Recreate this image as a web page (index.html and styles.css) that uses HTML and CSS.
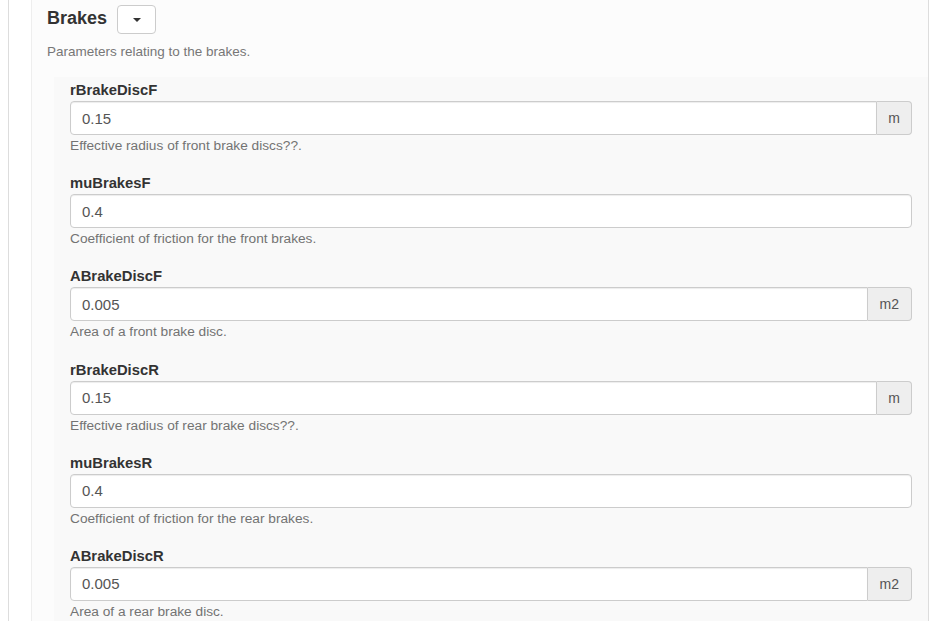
FILE: index.html
```html
<!DOCTYPE html>
<html>
<head>
<meta charset="utf-8">
<link rel="stylesheet" href="styles.css">
</head>
<body>
<div class="panel">
  <div class="section">
    <div class="header">
      <span class="title">Brakes</span>
      <button class="toggle"><span class="caret"></span></button>
    </div>
    <p class="desc">Parameters relating to the brakes.</p>
    <div class="params">
      <div class="group">
        <label class="label">rBrakeDiscF</label>
        <div class="input-group">
          <input class="input with-addon" type="text" value="0.15">
          <span class="addon">m</span>
        </div>
        <p class="help">Effective radius of front brake discs??.</p>
      </div>
      <div class="group">
        <label class="label">muBrakesF</label>
        <div class="input-group">
          <input class="input" type="text" value="0.4">
        </div>
        <p class="help">Coefficient of friction for the front brakes.</p>
      </div>
      <div class="group">
        <label class="label">ABrakeDiscF</label>
        <div class="input-group">
          <input class="input with-addon" type="text" value="0.005">
          <span class="addon addon-wide">m2</span>
        </div>
        <p class="help">Area of a front brake disc.</p>
      </div>
      <div class="group">
        <label class="label">rBrakeDiscR</label>
        <div class="input-group">
          <input class="input with-addon" type="text" value="0.15">
          <span class="addon">m</span>
        </div>
        <p class="help">Effective radius of rear brake discs??.</p>
      </div>
      <div class="group">
        <label class="label">muBrakesR</label>
        <div class="input-group">
          <input class="input" type="text" value="0.4">
        </div>
        <p class="help">Coefficient of friction for the rear brakes.</p>
      </div>
      <div class="group">
        <label class="label">ABrakeDiscR</label>
        <div class="input-group">
          <input class="input with-addon" type="text" value="0.005">
          <span class="addon addon-wide">m2</span>
        </div>
        <p class="help">Area of a rear brake disc.</p>
      </div>
    </div>
  </div>
</div>
</body>
</html>
```

FILE: styles.css
```css
html, body {
  margin: 0;
  padding: 0;
  background: #ffffff;
}
body {
  font-family: "Liberation Sans", Arial, Helvetica, sans-serif;
  color: #333333;
}
.panel {
  margin-left: 8px;
  width: 921px;
  box-sizing: border-box;
  border-left: 1px solid #dddddd;
  border-right: 1px solid #dddddd;
  padding-left: 22px;
}
.section {
  border-left: 1px solid #eeeeee;
  background: #fcfcfc;
  padding: 5px 0 0 15px;
}
.header {
  display: flex;
  align-items: center;
  gap: 10px;
  height: 29px;
}
.title {
  font-size: 18px;
  font-weight: bold;
  color: #333333;
  line-height: 29px;
  position: relative;
  top: -1px;
}
.toggle {
  width: 39px;
  height: 29px;
  margin: 0;
  padding: 0;
  background: #ffffff;
  border: 1px solid #cccccc;
  border-radius: 4px;
  display: flex;
  align-items: center;
  justify-content: center;
}
.caret {
  display: block;
  width: 0;
  height: 0;
  border-top: 4px solid #333333;
  border-left: 4px solid transparent;
  border-right: 4px solid transparent;
}
.desc {
  margin: 9px 0 16px 0;
  font-size: 13.5px;
  line-height: 18px;
  color: #777777;
}
.params {
  margin-left: 7px;
  background: #f9f9f9;
  padding: 3px 16px 0 16px;
}
.group {
  margin-bottom: 18.2px;
}
.label {
  display: block;
  font-size: 14.8px;
  font-weight: bold;
  line-height: 20px;
  margin-bottom: 1px;
  color: #333333;
}
.input-group {
  display: flex;
  height: 34px;
}
.input {
  flex: 1;
  min-width: 0;
  box-sizing: border-box;
  height: 34px;
  margin: 0;
  border: 1px solid #cccccc;
  border-radius: 4px;
  padding: 6px 11px;
  font-family: "Liberation Sans", Arial, Helvetica, sans-serif;
  font-size: 15px;
  color: #555555;
  background: #ffffff;
  box-shadow: inset 0 1px 1px rgba(0, 0, 0, 0.075);
}
.input.with-addon {
  border-top-right-radius: 0;
  border-bottom-right-radius: 0;
}
.addon {
  display: flex;
  align-items: center;
  justify-content: center;
  box-sizing: border-box;
  height: 34px;
  padding: 0 11px;
  border: 1px solid #cccccc;
  border-left: 0;
  border-radius: 0 4px 4px 0;
  background: #eeeeee;
  font-size: 14px;
  color: #555555;
}
.addon-wide {
  padding: 0 12px;
}
.help {
  margin: 2px 0 0 0;
  font-size: 13.7px;
  line-height: 18px;
  color: #737373;
}
```
